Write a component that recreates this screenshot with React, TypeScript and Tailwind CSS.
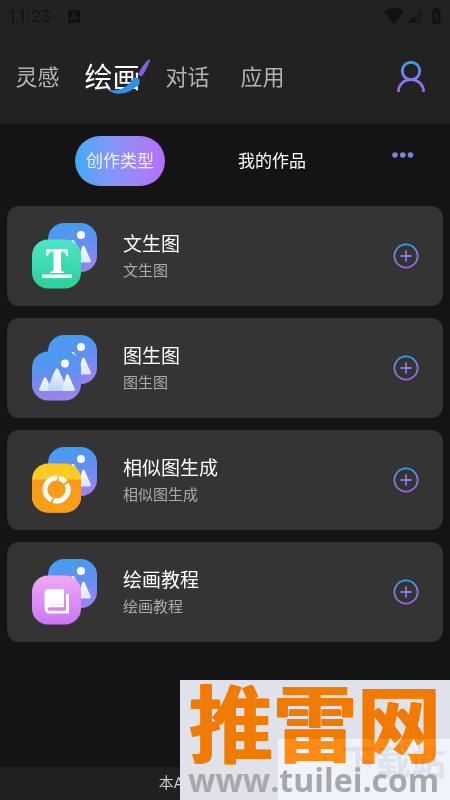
import { ReactNode } from 'react'

const FONT = "font-[Roboto,'Noto_Sans_CJK_SC',sans-serif]"

const TABS = ['灵感', '绘画', '对话', '应用']
const ACTIVE_TAB = '绘画'

interface CreationType {
  title: string
  description: string
  badge: ReactNode
}

// 渐变定义, 所有图标共用
function Gradients() {
  return (
    <svg width="0" height="0" className="absolute" aria-hidden="true">
      <defs>
        <linearGradient id="g-line" gradientUnits="userSpaceOnUse" x1="12" y1="0" x2="12" y2="24">
          <stop offset="0" stopColor="#25a4e0" />
          <stop offset="0.4" stopColor="#7c80ec" />
          <stop offset="1" stopColor="#a35fd8" />
        </linearGradient>
        <linearGradient id="g-user" gradientUnits="userSpaceOnUse" x1="14" y1="0" x2="14" y2="31">
          <stop offset="0" stopColor="#2ba6e6" />
          <stop offset="0.5" stopColor="#7d80f0" />
          <stop offset="1" stopColor="#a762de" />
        </linearGradient>
        <linearGradient id="g-image" x1="0" y1="0" x2="0.15" y2="1">
          <stop offset="0" stopColor="#409ff2" />
          <stop offset="0.5" stopColor="#6290f0" />
          <stop offset="1" stopColor="#9a82f0" />
        </linearGradient>
        <linearGradient id="g-hill" x1="0" y1="0" x2="0" y2="1">
          <stop offset="0" stopColor="#f6faff" />
          <stop offset="1" stopColor="#dbe8fd" />
        </linearGradient>
        <linearGradient id="g-peak" x1="0" y1="0" x2="0" y2="1">
          <stop offset="0" stopColor="#f2f8ff" />
          <stop offset="1" stopColor="#bcd4fa" />
        </linearGradient>
        <linearGradient id="g-green" x1="0" y1="0" x2="0" y2="1">
          <stop offset="0" stopColor="#4fe6c8" />
          <stop offset="1" stopColor="#2bcf9c" />
        </linearGradient>
        <linearGradient id="g-yellow" x1="0" y1="0" x2="0" y2="1">
          <stop offset="0" stopColor="#fbc81c" />
          <stop offset="1" stopColor="#fdd83c" />
        </linearGradient>
        <linearGradient id="g-orange" x1="0" y1="0" x2="0" y2="1">
          <stop offset="0" stopColor="#f79a1c" />
          <stop offset="1" stopColor="#fba015" />
        </linearGradient>
        <linearGradient id="g-pink" x1="0" y1="0" x2="0" y2="1">
          <stop offset="0" stopColor="#eeaaf4" />
          <stop offset="1" stopColor="#cc74f8" />
        </linearGradient>
      </defs>
    </svg>
  )
}

function ImageTile() {
  return (
    <>
      <rect width="49" height="49" rx="16" fill="url(#g-image)" />
      <circle cx="33" cy="12" r="4" fill="#fff" />
      <g strokeWidth="3" strokeLinejoin="round">
        <path d="M8.500 38 13 27.500 18 38Z" fill="url(#g-hill)" stroke="url(#g-hill)" />
        <path d="M17 38C19.500 31 22 24 25 18.500 28 24 31 31 33 38Z" fill="url(#g-peak)" stroke="url(#g-peak)" />
        <path d="M31.500 38 35.500 24.500 41.500 38Z" fill="url(#g-hill)" stroke="url(#g-hill)" />
      </g>
    </>
  )
}

function TextTile() {
  return (
    <>
      <rect width="49" height="49" rx="16" fill="url(#g-green)" />
      <path d="M14.500 9.500h21.500v7.300h-1.500c-.6-3.200-1.800-4.800-4.300-4.800h-1.200v17.500c0 2 .8 2.500 3.200 2.700v1.400H18.300v-1.400c2.400-.2 3.200-.7 3.200-2.700V12h-1.200c-2.500 0-3.700 1.600-4.300 4.800h-1.500Z" fill="#fff" />
      <rect x="10" y="35" width="30" height="3.500" rx="0.500" fill="#fff" />
    </>
  )
}

function RingTile() {
  return (
    <>
      <rect width="49" height="49" rx="16" fill="url(#g-yellow)" />
      <path d="M0 16h49v17a16 16 0 0 1-16 16H16A16 16 0 0 1 0 33Z" fill="url(#g-orange)" />
      <g fill="none" stroke="#fff" strokeWidth="5">
        <path d="M27 14.800A11.500 11.500 0 0 1 33.400 18.600" />
        <path d="M34.600 20.400A11.500 11.500 0 0 1 21.300 37" />
        <path d="M19.500 36.400A11.500 11.500 0 0 1 24.800 14.500" />
      </g>
    </>
  )
}

function BookTile() {
  return (
    <>
      <rect width="49" height="49" rx="16" fill="url(#g-pink)" />
      <path d="M16.500 13.500H32v15.800H18a4.500 4.500 0 0 0-3.300 1.500L12.500 33.500V17.500a4 4 0 0 1 4-4Z" fill="#fff" />
      <path d="M34 18.500h3V38H17a4.200 4.200 0 0 1 0-8.400h15v2.200H17.500a1.700 1.700 0 0 0 0 3.400H34Z" fill="#fff" />
    </>
  )
}

const CREATION_TYPES: CreationType[] = [
  { title: '文生图', description: '文生图', badge: <TextTile /> },
  { title: '图生图', description: '图生图', badge: <ImageTile /> },
  { title: '相似图生成', description: '相似图生成', badge: <RingTile /> },
  { title: '绘画教程', description: '绘画教程', badge: <BookTile /> },
]

function StatusBar() {
  return (
    <div className="flex h-8 items-center justify-between px-2 text-[#111]">
      <div className="flex items-center gap-[18px]">
        <span className="text-[17px] leading-5">11:23</span>
        <svg width="12" height="13" viewBox="0 0 12 13" aria-hidden="true">
          <rect width="12" height="13" rx="1.500" fill="currentColor" />
          <path d="M3 10 6 3l3 7M4.200 7.800h3.600" stroke="#222" strokeWidth="1.300" fill="none" />
        </svg>
      </div>
      <svg width="58" height="18" viewBox="0 0 58 18" fill="currentColor" aria-hidden="true">
        <path d="M0 5C6-.3 14-.3 20 5L10 17Z" />
        <path d="M38 2v14H24Z" opacity="0.500" />
        <path d="M31 9v7h-7Z" />
        <path d="M49 2h2V1h4v1h1.500v15H48.500V2Z" />
        <path d="M53 4.500 50.500 9.500H52V14l2.500-5H53Z" fill="#222" />
      </svg>
    </div>
  )
}

function BrushStroke() {
  return (
    <svg
      className="absolute top-0 left-[22px]"
      width="46"
      height="38"
      viewBox="0 0 46 38"
      aria-hidden="true"
    >
      <path d="M42.500.8c1.200-.6 1.800 0 1.400 1.200-2.400 6.500-5.300 11.500-8.300 15.500l-3.600-1.700C34.800 10 38 4 42.500.8Z" fill="#8a5ce0" />
      <path d="M0 28.500c4 3 9 3.500 13 2 5-1.500 8-3.500 11-6.500C26 18 32 17 33.500 21c1 4-1 6.500-4.500 7.500C22 35.500 7 38 0 28.500Z" fill="#318fe4" />
    </svg>
  )
}

function Header() {
  return (
    <header className="bg-[#222]">
      <StatusBar />
      <nav className="grid h-[92px] grid-cols-6 items-center">
        {TABS.map((tab) =>
          tab === ACTIVE_TAB ? (
            <button
              key={tab}
              aria-current="page"
              className="relative justify-self-center pt-0.5 text-[28px] leading-9 whitespace-nowrap text-white"
            >
              {tab}
              <BrushStroke />
            </button>
          ) : (
            <button key={tab} className="text-[22px] leading-9 whitespace-nowrap text-[#b4b4b4]">
              {tab}
            </button>
          )
        )}
        <button aria-label="个人中心" className="col-start-6 mr-1 mb-1 justify-self-center">
          <svg width="28" height="31" viewBox="0 0 28 31" fill="none" stroke="url(#g-user)" strokeWidth="2.800" aria-hidden="true">
            <circle cx="14" cy="10" r="8.700" />
            <path d="M1.400 31C1.400 23.500 7 18.700 14 18.700S26.600 23.500 26.600 31" />
          </svg>
        </button>
      </nav>
    </header>
  )
}

function SubTabs() {
  return (
    <div className="flex h-[82px] pt-3 pr-9 pl-[75px] text-[17px] text-white">
      <button className="h-[50px] w-[90px] rounded-full bg-linear-to-r from-[#3aabf8] to-[#b76ef8] pt-0.5 text-[#f2f0ff]">
        创作类型
      </button>
      <button className="ml-[60px] h-[50px] w-[94px] pt-0.5">我的作品</button>
      <button aria-label="更多" className="ml-auto h-[38px]">
        <svg width="22" height="6" viewBox="0 0 22 6" fill="#7386e6" aria-hidden="true">
          <circle cx="3" cy="3" r="2.800" />
          <circle cx="10.800" cy="3" r="2.800" />
          <circle cx="18.500" cy="3" r="2.800" />
        </svg>
      </button>
    </div>
  )
}

function CreationCard({ title, description, badge }: CreationType) {
  return (
    <li className="flex h-[100px] items-center rounded-xl bg-[#343434] pr-6 pl-[25px]">
      <svg width="66" height="66" viewBox="0 0 66 66" className="shrink-0" aria-hidden="true">
        <g transform="translate(16 0)">
          <ImageTile />
        </g>
        <g transform="translate(0 16.500)">{badge}</g>
      </svg>
      <div className="ml-[25px] flex-1 pt-0.5">
        <h2 className="text-[19px] leading-7 text-white">{title}</h2>
        <p className="text-[15px] leading-6 text-[#aaa]">{description}</p>
      </div>
      <button aria-label={`新建${title}`}>
        <svg width="26" height="26" viewBox="-1 -1 26 26" fill="none" stroke="url(#g-line)" strokeWidth="1.800" aria-hidden="true">
          <circle cx="12" cy="12" r="11.600" />
          <path d="M12 6.500v11M6.500 12h11" stroke="#7f80e8" />
        </svg>
      </button>
    </li>
  )
}

function SiteBanner() {
  return (
    <div className="absolute right-0 bottom-0 h-[120px] w-[270px] bg-[#dfe2ea]">
      <div className="pl-2 font-['Noto_Sans_CJK_SC',sans-serif] text-[84px] leading-[80px] font-bold whitespace-nowrap text-[#f17a00] [text-shadow:1px_0_#f17a00,2px_0_#f17a00]">
        推雷网
      </div>
      <div className="absolute right-0 bottom-0 h-[61px] w-[172px] bg-[#101112] mix-blend-plus-lighter" />
      <div className="absolute top-[58px] right-1 font-['Noto_Sans_CJK_SC',sans-serif] text-[35px] leading-[44px] font-bold whitespace-nowrap text-[#405060]/10">
        下载站
      </div>
      <div className="absolute bottom-0 left-2 font-['Open_Sans',sans-serif] text-[32px] leading-[40px] font-bold whitespace-nowrap text-[#a8a8a8]">
        www.tuilei.com
      </div>
    </div>
  )
}

export default function App() {
  return (
    <div className={`relative flex min-h-screen flex-col bg-[#141414] ${FONT}`}>
      <Gradients />
      <Header />
      <main className="flex-1">
        <SubTabs />
        <ul className="flex flex-col gap-3 px-[7px]">
          {CREATION_TYPES.map((item) => (
            <CreationCard key={item.title} {...item} />
          ))}
        </ul>
      </main>
      <footer className="bg-[#202020] text-center text-[15px] leading-[33px] text-[#ccc]">
        本APP内容由AI生成
      </footer>
      <SiteBanner />
    </div>
  )
}
